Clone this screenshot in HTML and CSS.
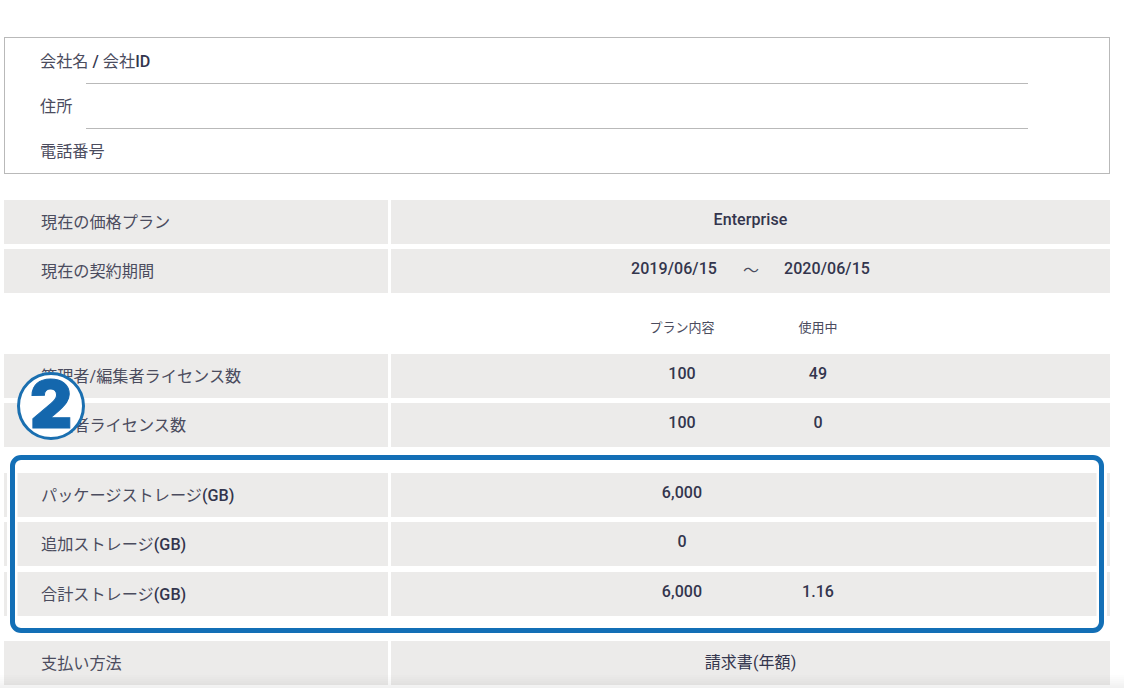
FILE: index.html
```html
<!DOCTYPE html>
<html lang="ja">
<head>
<meta charset="utf-8">
<title>プラン</title>
<link rel="stylesheet" href="styles.css">
</head>
<body>
<main class="page">
  <section class="info">
    <div class="info-row"><span class="info-label">会社名 <b>/</b> 会社<b>ID</b></span></div>
    <div class="info-row"><span class="info-label">住所</span></div>
    <div class="info-row"><span class="info-label">電話番号</span></div>
  </section>

  <section class="group">
    <div class="row"><div class="label">現在の価格プラン</div><div class="value center"><span>Enterprise</span></div></div>
    <div class="row"><div class="label">現在の契約期間</div><div class="value center dates"><span>2019/06/15</span><i>～</i><span>2020/06/15</span></div></div>
  </section>

  <div class="head-row"><div class="cols"><span>プラン内容</span><span>使用中</span></div></div>

  <section class="group licences">
    <div class="row"><div class="label">管理者/編集者ライセンス数</div><div class="value cols"><span>100</span><span>49</span></div></div>
    <div class="row"><div class="label">閲覧者ライセンス数</div><div class="value cols"><span>100</span><span>0</span></div></div>
  </section>

  <section class="group storage">
    <div class="row"><div class="label">パッケージストレージ<b>(GB)</b></div><div class="value cols"><span>6,000</span><span></span></div></div>
    <div class="row"><div class="label">追加ストレージ<b>(GB)</b></div><div class="value cols"><span>0</span><span></span></div></div>
    <div class="row"><div class="label">合計ストレージ<b>(GB)</b></div><div class="value cols"><span>6,000</span><span>1.16</span></div></div>
    <div class="highlight"></div>
  </section>

  <section class="group payment">
    <div class="row"><div class="label">支払い方法</div><div class="value center"><span class="jp">請求書(年額)</span></div></div>
  </section>

  <div class="badge"><span>2</span></div>
</main>
<div class="fade"></div>
</body>
</html>
```
FILE: styles.css
```css
* { box-sizing: border-box; }
html, body { margin: 0; height: 100%; overflow: hidden; background: #fff; }
body {
  font-family: Roboto, "Noto Sans CJK JP", sans-serif;
  color: #33354d;
}
b { font-weight: 500; color: #33354d; }
.page { position: relative; width: 1110px; padding: 37px 0 0 4px; }

.info {
  height: 137px;
  border: 1px solid #b9b9b9;
  padding: 0 81px 0 35px;
  display: flex;
  flex-direction: column;
}
.info-row {
  height: 45px;
  flex: none;
  padding-top: 12px;
  position: relative;
  font-size: 16.16px;
  line-height: 23px;
  color: #4b4c5e;
}
.info-row + .info-row::before {
  content: "";
  position: absolute;
  top: 0;
  left: 46px;
  right: 0;
  height: 1px;
  background: #b9b9b9;
}

.group { display: flex; flex-direction: column; gap: 5px; margin-top: 26px; position: relative; }
.row { display: flex; gap: 3px; height: 44px; }
.storage .row:nth-child(3) { margin-top: 1px; }
.label {
  flex: 0 0 384px;
  background: #ecebea;
  padding: 11px 0 0 37px;
  font-size: 16.16px;
  line-height: 23px;
  color: #4b4c5e;
}
.value {
  flex: 1;
  background: #ecebea;
  font-size: 16px;
  font-weight: 500;
  line-height: 20px;
  padding-top: 10px;
  letter-spacing: .08px;
}
.center { display: flex; justify-content: center; }
.dates { gap: 26px; }
.dates i { font-style: normal; font-weight: 400; color: #4b4c5e; width: 15px; padding-top: 2px; text-align: center; }
.cols {
  display: grid;
  grid-template-columns: 136px 136px;
  justify-content: start;
  padding-left: 223px;
  text-align: center;
}
.head-row {
  height: 61px;
  padding: 25px 0 0 387px;
  font-size: 13px;
  line-height: 20px;
  color: #4b4c5e;
}
.licences { margin-top: 0; }
.group.storage { margin-top: 26px; }
.group.payment { margin-top: 25px; }
.payment .value { padding-top: 12px; font-weight: 400; }

.highlight {
  position: absolute;
  left: 6px;
  right: 6px;
  top: -18px;
  height: 178px;
  border: 5px solid #136fb6;
  border-radius: 11px;
  box-shadow: 0 0 0 3px #fff, inset 0 0 0 2.5px #fff;
}
.badge {
  position: absolute;
  left: 17px;
  top: 372px;
  width: 68px;
  height: 68px;
  padding-bottom: 4px;
  border: 3px solid #1a6fb0;
  border-radius: 50%;
  background: #fff;
  display: flex;
  align-items: center;
  justify-content: center;
  font-family: Inter, sans-serif;
  font-weight: 900;
  font-size: 66px;
  line-height: 1;
  color: #1467ad;
  -webkit-text-stroke: 1px #1467ad;
}
.fade {
  position: fixed;
  left: 0;
  right: 0;
  bottom: 0;
  height: 14px;
  background: linear-gradient(to bottom, rgba(0,0,0,0), rgba(0,0,0,.055));
  pointer-events: none;
}
```
